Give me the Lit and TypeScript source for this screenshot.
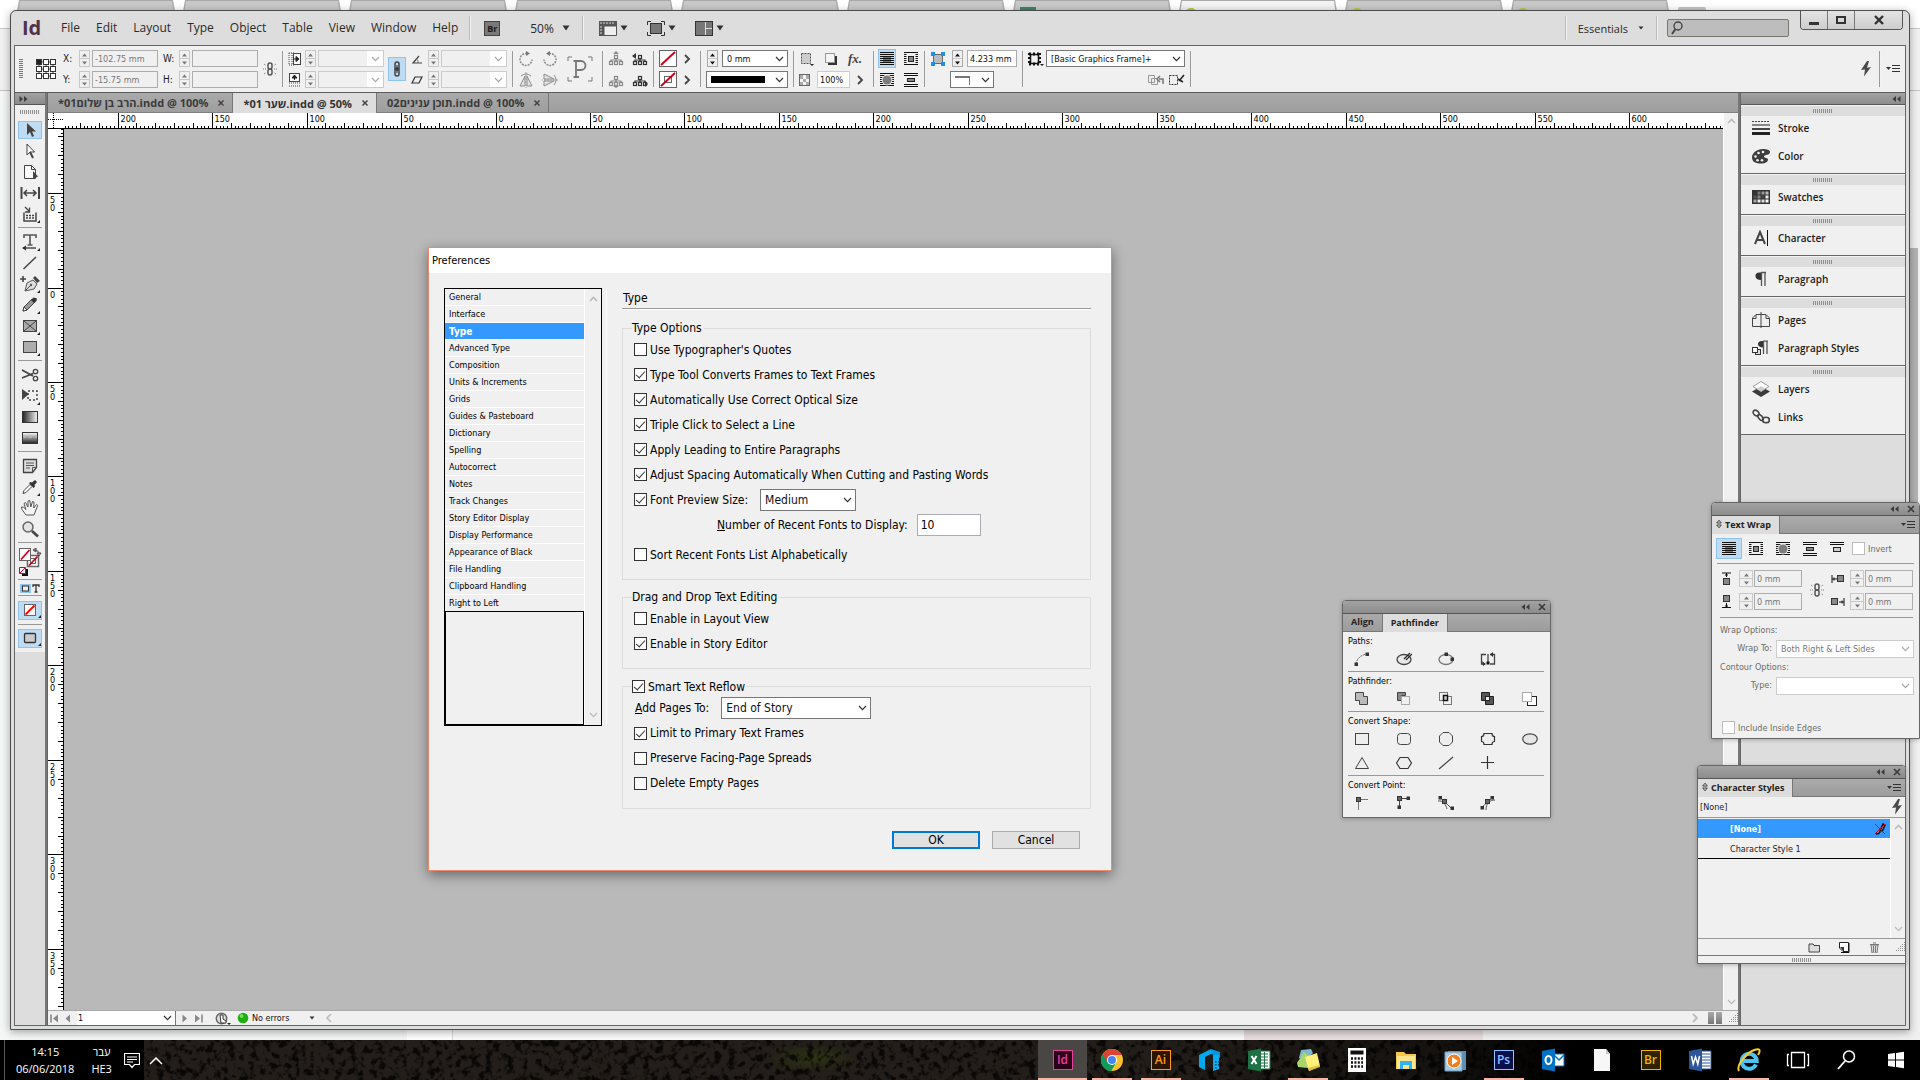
import { LitElement, html, svg, css } from "lit";
import { customElement, state } from "lit/decorators.js";
import { classMap } from "lit/directives/class-map.js";

/* ---------- icon helpers ---------- */
const ic = (w: number, h: number, body: unknown) => html`<svg class="ic" width=${w} height=${h} viewBox="0 0 ${w} ${h}" aria-hidden="true">${body}</svg>`;
const chevDown = ic(9, 6, svg`<path d="M1 1l3.5 3.6L8 1" fill="none" stroke="currentColor" stroke-width="1.2"/>`);
const chevUp = ic(9, 6, svg`<path d="M1 5l3.5-3.6L8 5" fill="none" stroke="currentColor" stroke-width="1.6"/>`);
const chevRight = ic(7, 10, svg`<path d="M1 1l4 4-4 4" fill="none" stroke="currentColor" stroke-width="1.8"/>`);
const chevLeft = ic(7, 10, svg`<path d="M6 1L2 5l4 4" fill="none" stroke="currentColor" stroke-width="1.6"/>`);
const caret = ic(8, 6, svg`<path d="M0.5 0.5h7L4 5.5z" fill="#333"/>`);
const caretSm = ic(6, 4, svg`<path d="M0.5 0.5h5L3 3.5z" fill="#333"/>`);
const dblLeft = ic(9, 6, svg`<path d="M4 0v6L0.500 3zM8.500 0v6L5 3z" fill="#3c3c3c"/>`);
const dblRight = ic(9, 6, svg`<path d="M0.500 0v6L4 3zM5 0v6l3.500-3z" fill="#3c3c3c"/>`);
const closeX = ic(8, 8, svg`<path d="M1 1l6 6M7 1L1 7" stroke="#3c3c3c" stroke-width="1.7"/>`);
const flyout = ic(15, 10, svg`<path d="M0 3h5L2.500 6z" fill="#333"/><path d="M6 1.500h8M6 4.500h8M6 7.500h8" stroke="#333" stroke-width="1"/>`);
const updown = ic(6, 10, svg`<path d="M0.700 4L3 1.200 5.300 4zM0.700 6L3 8.800 5.300 6z" fill="none" stroke="#333" stroke-width="0.900"/>`);
const grip = ic(20, 4, svg`<path d="${Array.from({ length: 10 }, (_, i) => `M${i * 2 + 0.5} 0v4`).join("")}" stroke="#8d8d8d"/>`);
const sizeGrip = ic(10, 10, svg`<path d="M9.500 0v10M7.500 2v8M5.500 4v6M3.500 6v4M1.500 8v2" stroke="#8d8d8d" stroke-dasharray="1 1"/>`);
const chainOff = ic(14, 16, svg`<g fill="none" stroke="#555" stroke-width="1.500"><rect x="5" y="2" width="4" height="6" rx="2"/><rect x="5" y="8" width="4" height="6" rx="2"/></g><path d="M0 8h3M11 8h3M1 3l2 1.500M13 3l-2 1.500M1 13l2-1.500M13 13l-2-1.500" stroke="#777" stroke-dasharray="1 1"/>`);
const chainOn = ic(10, 16, svg`<g fill="none" stroke="#444" stroke-width="1.500"><rect x="3" y="1" width="4" height="8" rx="2"/><rect x="3" y="7" width="4" height="8" rx="2"/></g><path d="M5 4v8" stroke="#222"/>`);
const bolt = ic(12, 16, svg`<path d="M7 0L1 9l4-0.500L4 15.500 11 6l-4 0.700L9 0z" fill="#4a4a4a"/>`);
const redSlash = (w: number, h: number) => ic(w, h, svg`<rect x="0.500" y="0.500" width="${w - 1}" height="${h - 1}" fill="#fff" stroke="#666"/><path d="M2 ${h - 2}L${w - 2} 2" stroke="#d0021b" stroke-width="2"/>`);

const wrapLines = (mid: unknown, rows = [1, 3, 5, 7, 9, 11, 13]) => ic(14, 14, svg`<path d="${rows.map((y) => `M0 ${y - 0.5}h14`).join("")}" stroke="#111"/>${mid}`);
const wrapIcons = [
  wrapLines(svg`<rect x="3" y="4" width="8" height="6" fill="#777"/><path d="M3 4.500h8M3 6.500h8M3 8.500h8" stroke="#111"/>`),
  wrapLines(svg`<rect x="2.500" y="2" width="9" height="10" fill="#f0f0f0"/><rect x="4.500" y="4.500" width="5" height="5" fill="#888" stroke="#222"/>`),
  wrapLines(svg`<circle cx="7" cy="7" r="5.400" fill="#f0f0f0"/><circle cx="7" cy="7" r="4.500" fill="#7d7d7d"/>`),
  wrapLines(svg`<rect x="3.500" y="5.500" width="7" height="3" fill="#888" stroke="#222"/>`, [1, 3, 12, 14]),
  wrapLines(svg`<rect x="3.500" y="5.500" width="7" height="4" fill="#ccc" stroke="#222"/>`, [1, 3]),
];

/* tool palette glyphs, drawn on a 20x18 grid */
const corner = svg`<path d="M20 15v3h-3z" fill="#222"/>`;
const tool = (b: unknown, c = false) => ic(20, 18, svg`${b}${c ? corner : ""}`);
const tools: { name: string; glyph: unknown; on?: boolean }[][] = [
  [
    { name: "Selection", on: true, glyph: tool(svg`<path d="M7 2v12l3-3 2 5 2-1-2-4.500h4z" fill="#444"/>`) },
    { name: "Direct Selection", glyph: tool(svg`<path d="M7 2v11l3-3h4.500z" fill="#fff" stroke="#444"/><path d="M10 10l3 6" stroke="#444" stroke-width="2"/>`) },
    { name: "Page", glyph: tool(svg`<path d="M4.500 2.500h7l4 4v9h-11z" fill="#fafafa" stroke="#444"/><path d="M11.500 2.500v4h4" fill="none" stroke="#444"/><path d="M13 8v8l5-2.500z" fill="#444"/>`) },
    { name: "Gap", glyph: tool(svg`<path d="M1.500 3v12M19 3v12" stroke="#444" stroke-width="2"/><path d="M4 9h12M7 6L4 9l3 3M13 6l3 3-3 3" fill="none" stroke="#444" stroke-width="1.500"/>`) },
    { name: "Content Collector", glyph: tool(svg`<path d="M4 7.500v8.500h12V7.500" fill="none" stroke="#444" stroke-width="1.500"/><path d="M6 10.500h8M6 13h8" stroke="#444" stroke-dasharray="2 1" stroke-width="1.500"/><path d="M5 2l4 4M9.500 2.500V7H5" fill="none" stroke="#444" stroke-width="1.300"/>`, true) },
  ],
  [
    { name: "Type", glyph: tool(svg`<path d="M4 5V2h12v3M10 2v10M7.500 12h5" fill="none" stroke="#555" stroke-width="1.600"/><path d="M3 15h13" stroke="#333" stroke-width="1.300"/><path d="M6 12.500L2 15l4 2.500z" fill="#333"/>`, true) },
    { name: "Line", glyph: tool(svg`<path d="M3.500 15L16 3" stroke="#444" stroke-width="1.500"/>`) },
    { name: "Add Anchor Point", glyph: tool(svg`<path d="M0 4h6M3 1v6" stroke="#444" stroke-width="1.600"/><path d="M5 16l2-8 6-3 4 4-3 5z" fill="#ddd" stroke="#555"/><path d="M5 16l5-5" stroke="#555"/><circle cx="11" cy="10" r="1.200" fill="#555"/><path d="M13 3l2-2 5 5-3 2z" fill="#444"/>`, true) },
    { name: "Pencil", glyph: tool(svg`<path d="M3 15l1-4 8-8 3 3-8 8z" fill="#999" stroke="#444"/><path d="M11 4l2.500-2.500 3.500 1-0.500 2.500L14 7z" fill="#333"/><path d="M3 15l1-4 3 3z" fill="#fff" stroke="#444"/>`, true) },
    { name: "Rectangle Frame", glyph: tool(svg`<rect x="3.500" y="3.500" width="13" height="11" fill="#aaa" stroke="#444"/><path d="M4 4l12 10M16 4L4 14" stroke="#444"/>`, true) },
    { name: "Rectangle", glyph: tool(svg`<rect x="3.500" y="3.500" width="13" height="11" fill="#adadad" stroke="#444"/>`, true) },
  ],
  [
    { name: "Scissors", glyph: tool(svg`<path d="M2 4l11 6M2 12l11-4.500" stroke="#444" stroke-width="1.800"/><circle cx="15.500" cy="5.500" r="2.200" fill="none" stroke="#444" stroke-width="1.300"/><circle cx="15.500" cy="12.500" r="2.200" fill="none" stroke="#444" stroke-width="1.300"/>`) },
    { name: "Free Transform", glyph: tool(svg`<path d="M2 2v11l7-6z" fill="#444"/><rect x="8" y="4" width="9" height="9" fill="none" stroke="#444" stroke-width="1.500" stroke-dasharray="2 2"/>`, true) },
    { name: "Gradient Swatch", glyph: tool(svg`<defs><linearGradient id="g1"><stop offset="0" stop-color="#222"/><stop offset="1" stop-color="#f5f5f5"/></linearGradient></defs><rect x="2.500" y="3.500" width="15" height="11" fill="url(#g1)" stroke="#333"/>`) },
    { name: "Gradient Feather", glyph: tool(svg`<defs><linearGradient id="g2" x1="0" y1="0" x2="0" y2="1"><stop offset="0" stop-color="#fff"/><stop offset="1" stop-color="#222"/></linearGradient></defs><rect x="2.500" y="3.500" width="15" height="11" fill="url(#g2)" stroke="#333"/><path d="M3 6h3v3H3zM9 6h3v3H9zM15 6h2v3h-2z" fill="#bbb" opacity="0.700"/>`) },
  ],
  [
    { name: "Note", glyph: tool(svg`<path d="M3.500 2.500h13v8l-4 5h-9z" fill="#ddd" stroke="#444" stroke-width="1.300"/><path d="M6 6h8M6 8.500h8M6 11h4M12.500 15v-4.500h4" fill="none" stroke="#555"/>`) },
    { name: "Eyedropper", glyph: tool(svg`<path d="M3 15.500l1-3 6-6 2 2-6 6z" fill="#fff" stroke="#444"/><path d="M9 5l1.500-1 1.500 0.500L15 2l2 2-2.500 3 0.500 1.500-1.500 1.500z" fill="#333"/>`, true) },
    { name: "Hand", glyph: tool(svg`<path d="M6 16L2 10.500 1.500 8 3.500 8.200 6 10.500 4 4.500 5.500 3.500 8 8 8 2 9.800 1.500 10.800 8 12.500 2.500 14 3 13.700 9 16.500 5.500 17.800 6.500 15.500 12 14 16z" fill="#f4f4f4" stroke="#555"/>`) },
    { name: "Zoom", glyph: tool(svg`<circle cx="8" cy="7" r="5" fill="#e4e4e4" stroke="#666" stroke-width="1.500"/><path d="M12 11l6 5.500" stroke="#444" stroke-width="2.600"/>`) },
  ],
];

/* dock panel glyphs, 18x16 */
const dock: { name: string; glyph: unknown }[][] = [
  [
    { name: "Stroke", glyph: ic(18, 16, svg`<path d="M0 1.500h18" stroke="#444" stroke-dasharray="2 1"/><path d="M0 5h18" stroke="#666" stroke-width="1.500"/><path d="M0 9h18" stroke="#444" stroke-width="2"/><path d="M0 13.500h18" stroke="#222" stroke-width="3"/>`) },
    { name: "Color", glyph: ic(18, 16, svg`<path d="M11 1C5 1 0 5 0 9.500S4 15.500 9 15.500c5 0 7-2 7-4 0-2-4-1-4-3 0-2 6-1 6-4.500C18 2 15 1 11 1z" fill="#3d3d3d"/><g fill="#f0f0f0"><circle cx="11" cy="4" r="1.300"/><circle cx="6.500" cy="5" r="1.300"/><circle cx="3.500" cy="8.500" r="1.300"/><circle cx="5.500" cy="12.300" r="1.300"/><circle cx="10" cy="12.300" r="1.300"/></g>`) },
  ],
  [{ name: "Swatches", glyph: ic(18, 16, svg`<rect x="0" y="1" width="18" height="14" fill="#333"/>${[0, 1, 2].map((r) => [0, 1, 2, 3].map((c) => svg`<rect x="${1.500 + c * 4}" y="${2.500 + r * 4}" width="3" height="3" fill="${["#333", "#777", "#999", "#bbb", "#555", "#888", "#444", "#eee", "#aaa", "#eee", "#ddd", "#fff"][r * 4 + c]}"/>`))}`) }],
  [{ name: "Character", glyph: ic(18, 16, svg`<path d="M3 14L8 2l5 12M5 10h6" fill="none" stroke="#444" stroke-width="2"/><path d="M15.500 0v16" stroke="#111"/>`) }],
  [{ name: "Paragraph", glyph: ic(18, 16, svg`<path d="M9 1.500C5 1 3.500 2.500 3.500 5s2 4 5.500 4z" fill="#333"/><path d="M9.500 1v14M13 1v14M9 1.500h5" stroke="#555" stroke-width="1.300" fill="none"/>`) }],
  [
    { name: "Pages", glyph: ic(18, 16, svg`<path d="M0.500 14.500V6L4 2.500h10L17.500 6v8.500z" fill="#eee" stroke="#444"/><path d="M9 0v16M4 3v3.500H1M14 3v3.500h3" stroke="#444" fill="none"/>`) },
    { name: "Paragraph Styles", glyph: ic(18, 16, svg`<path d="M11 1C7.500 0.500 6 2 6 4s2 3.500 5 3.500z" fill="#333"/><path d="M11.500 1v13M15 1v13M11 1.200h5" stroke="#555" stroke-width="1.300" fill="none"/><rect x="3.500" y="9.500" width="5" height="5" fill="#ddd" stroke="#333"/><rect x="0.500" y="7.500" width="5" height="5" fill="#fff" stroke="#333"/>`) },
  ],
  [
    { name: "Layers", glyph: ic(18, 16, svg`<path d="M9 5.500l9 5-9 5.500-9-5.500z" fill="#3a3a3a"/><path d="M9 0.500L17 5.500 9 10.500 1 5.500z" fill="#fff" stroke="#999"/><path d="M9 5l4 3-4 2.500L5 8z" fill="#ccc"/>`) },
    { name: "Links", glyph: ic(18, 16, svg`<g fill="none" stroke="#444" stroke-width="1.600"><ellipse cx="4" cy="4" rx="3.200" ry="2.400" transform="rotate(40 4 4)"/><ellipse cx="8.500" cy="8.500" rx="3.500" ry="1.800" transform="rotate(50 8.500 8.500)"/><ellipse cx="14" cy="11" rx="3.400" ry="2.800"/></g>`) },
  ],
];

/* pathfinder glyphs, 16x14 */
const p = (b: unknown) => ic(16, 14, b);
const sq = (x: number, y: number) => svg`<rect x="${x - 1.500}" y="${y - 1.500}" width="3.500" height="3.500" fill="#333"/>`;
const pathSections: { name: string; rows: [string, unknown][][] }[] = [
  { name: "Paths:", rows: [[
    ["Join Path", p(svg`<path d="M2 12C3 6 7 3 13 2" fill="none" stroke="#666" stroke-dasharray="2 1"/>${sq(2, 12)}${sq(13, 2)}`)],
    ["Open Path", p(svg`<ellipse cx="8" cy="7.500" rx="7" ry="5" fill="#e8e8e8" stroke="#444" stroke-width="1.300"/><path d="M8 7l6-6M10 8l6-6" stroke="#222" stroke-width="1.200"/>`)],
    ["Close Path", p(svg`<ellipse cx="8" cy="7.500" rx="7" ry="5" fill="#eee" stroke="#777" stroke-width="1.300"/>${sq(8, 2)}${sq(14, 7)}`)],
    ["Reverse Path", p(svg`<path d="M5 12H1.500V2.500H6M10 2.500h4.500V12H10M8 2v10" fill="none" stroke="#444" stroke-width="1.300"/><path d="M2 9l4 3-3 2zM13 0v5l-3-2.500z" fill="#333"/><rect x="6.500" y="9.500" width="3" height="3" fill="#111"/>`)],
  ]] },
  { name: "Pathfinder:", rows: [[
    ["Add", p(svg`<path d="M1.500 0.500h8v4h4v8h-8v-4h-4z" fill="#bbb" stroke="#444"/>`)],
    ["Subtract", p(svg`<path d="M1.500 0.500h8v3H5.500v5h-4z" fill="#888" stroke="#444"/><rect x="5.500" y="4.500" width="8" height="8" fill="#f0f0f0" stroke="#aaa"/>`)],
    ["Intersect", p(svg`<rect x="1.500" y="0.500" width="8" height="8" fill="none" stroke="#777"/><rect x="5.500" y="4.500" width="8" height="8" fill="none" stroke="#777"/><rect x="5.500" y="3.500" width="4" height="5" fill="#ccc" stroke="#111" stroke-width="1.500"/>`)],
    ["Exclude Overlap", p(svg`<path d="M1.500 0.500h8v4h4v8h-8v-4h-4z" fill="#555" stroke="#222"/><rect x="5.500" y="4.500" width="4" height="4" fill="#eee" stroke="#222"/>`)],
    ["Minus Back", p(svg`<rect x="5.500" y="4.500" width="9" height="9" fill="#fff" stroke="#222"/><rect x="0.500" y="0.500" width="9" height="9" fill="#fff" stroke="#aaa"/>`)],
  ]] },
  { name: "Convert Shape:", rows: [[
    ["Rectangle", p(svg`<rect x="1.500" y="1.500" width="13" height="11" fill="#eee" stroke="#444"/>`)],
    ["Rounded Rectangle", p(svg`<rect x="1.500" y="1.500" width="13" height="11" rx="3" fill="#eee" stroke="#444"/>`)],
    ["Beveled Rectangle", p(svg`<path d="M5 0.500h6l3.500 3.500v6L11 13.500H5L1.500 10V4z" fill="#eee" stroke="#444"/>`)],
    ["Inverse Rounded Rectangle", p(svg`<path d="M4 1.500h8q0 3 2.500 3v5q-2.500 0-2.500 3H4q0-3-2.500-3v-5Q4 4.500 4 1.500z" fill="#eee" stroke="#333" stroke-width="1.200"/>`)],
    ["Ellipse", p(svg`<ellipse cx="8" cy="7" rx="7.300" ry="5.200" fill="#e6e6e6" stroke="#444" stroke-width="1.200"/>`)],
  ], [
    ["Triangle", p(svg`<path d="M8 1.500L14.500 12.500h-13z" fill="#eee" stroke="#444"/>`)],
    ["Polygon", p(svg`<path d="M4 1.500h8l3.500 5.500-3.500 5.500H4L0.500 7z" fill="#eee" stroke="#333" stroke-width="1.200"/>`)],
    ["Line", p(svg`<path d="M1 13L15 1" stroke="#444" stroke-width="1.200"/>`)],
    ["Orthogonal Line", p(svg`<path d="M1 6.500h13M7.500 0v13" stroke="#333" stroke-width="1.200"/>`)],
  ]] },
  { name: "Convert Point:", rows: [[
    ["Plain", p(svg`<path d="M4.500 3v11M4 3.500h10" stroke="#777"/><rect x="2.500" y="1.500" width="4" height="4" fill="#666" stroke="#333"/>`)],
    ["Corner", p(svg`<path d="M3.500 3v9M4 2.500h9" stroke="#444"/><rect x="1.500" y="0.500" width="4" height="4" fill="#666" stroke="#333"/>${sq(12, 2)}${sq(3, 11)}`)],
    ["Smooth", p(svg`<path d="M1 0l13 13M0 5c5-1 8 4 9 8" fill="none" stroke="#555"/><rect x="4.500" y="3.500" width="4" height="4" fill="#666" stroke="#333"/>${sq(2, 1.500)}${sq(14, 12)}`)],
    ["Symmetrical", p(svg`<path d="M1 12L13 1M15 4C10 4 6 7 6 14" fill="none" stroke="#555"/><rect x="5.500" y="3.500" width="4" height="4" fill="#666" stroke="#333"/>${sq(12, 1.500)}${sq(2, 11.500)}`)],
  ]] },
];

/* ---------- data ---------- */
const menus = ["File", "Edit", "Layout", "Type", "Object", "Table", "View", "Window", "Help"];
const docs = [
  { name: "*01הרב בן שלום.indd @ 100%", on: false },
  { name: "*01 שער.indd @ 50%", on: true },
  { name: "02תוכן ענינים.indd @ 100%", on: false },
];
const prefs = ["General", "Interface", "Type", "Advanced Type", "Composition", "Units & Increments", "Grids", "Guides & Pasteboard", "Dictionary", "Spelling", "Autocorrect", "Notes", "Track Changes", "Story Editor Display", "Display Performance", "Appearance of Black", "File Handling", "Clipboard Handling", "Right to Left"];

const PX_PER_MM = 1.8898;
const ticks = (origin: number, length: number) => {
  const out: { pos: number; mm: number }[] = [];
  const first = Math.ceil(-origin / PX_PER_MM / 2) * 2;
  for (let mm = first; origin + mm * PX_PER_MM < length; mm += 2) out.push({ pos: Math.floor(origin + mm * PX_PER_MM) + 0.5, mm });
  return out;
};

/* taskbar glyphs, 24x24 */
const adobe = (t: string, bg: string, fg: string) => html`<span class="adobe" style="background:${bg};color:${fg};border-color:${fg}">${t}</span>`;
const apps: { name: string; glyph: unknown; open?: boolean; on?: boolean }[] = [
  { name: "InDesign", open: true, on: true, glyph: adobe("Id", "#2d0019", "#e83e9c") },
  { name: "Chrome", open: true, glyph: ic(24, 24, svg`<circle cx="12" cy="12" r="11" fill="#fbc02d"/><path d="M12 12L2.500 6.500A11 11 0 0 1 21.500 6.500L21.700 7H12z" fill="#db4437"/><path d="M2.500 6.500A11 11 0 0 0 11 23l5-8.500-4-2.500z" fill="#0f9d58"/><path d="M2.500 6.500L7.700 14.500 12 12 12 7z" fill="#db4437"/><path d="M2.500 6.500L7.700 14.500 12 16 16 14.500 11 23A11 11 0 0 1 2.500 6.500z" fill="#0f9d58"/><circle cx="12" cy="12" r="5" fill="#fff"/><circle cx="12" cy="12" r="4" fill="#4285f4"/>`) },
  { name: "Illustrator", open: true, glyph: adobe("Ai", "#2b1400", "#ff9a1e") },
  { name: "Azure", glyph: ic(24, 24, svg`<path d="M1 7L13 1v5L7 9v13l-6-3z" fill="#00a8ee"/><path d="M13 1l9 3v6l-4-2-5-2z" fill="#0098e0"/><path d="M15 7h6v14l-6 2z" fill="#00b0f4"/><path d="M17 13h1.500v1.500H17zM20 13h1.500v1.500H20zM17 16h1.500v1.500H17zM20 16h1.500v1.500H20zM17 19h1.500v1.500H17z" fill="#053a5c"/>`) },
  { name: "Excel", glyph: ic(24, 24, svg`<path d="M12 3h11v18H12z" fill="#fff" stroke="#1e7145"/><path d="M14 6h7M14 9h7M14 12h7M14 15h7M14 18h7M17.500 4v16" stroke="#1e7145"/><path d="M1 3l13-2.500v23L1 21z" fill="#1e7145"/><path d="M4.500 8l5 8M9.500 8l-5 8" stroke="#fff" stroke-width="2"/>`) },
  { name: "Sticky Notes", open: true, glyph: ic(24, 24, svg`<path d="M5 2l10-1 2 4-8 8-6-3z" fill="#7fb8cc"/><path d="M1 15L8 4l8 6-4 10-10-1z" fill="#a8d66c"/><path d="M9 9l12-4 3 13-11 5z" fill="#fff07a"/><path d="M12 20l12-3v2l-11 4z" fill="#e0c040"/>`) },
  { name: "Calculator", glyph: ic(24, 24, svg`<rect x="3" y="0" width="18" height="24" fill="#fff"/><rect x="5.500" y="2.500" width="13" height="4" fill="#111"/><path d="M6 10.500h12M6 14.500h12M6 18.500h12" stroke="#111" stroke-width="2.500" stroke-dasharray="2 1.400"/>`) },
  { name: "File Explorer", glyph: ic(24, 24, svg`<path d="M2 4h8l2 2h10v15H2z" fill="#f5c84c"/><path d="M3 8h18v13H3z" fill="#ffe48c"/><path d="M6 21v-8h12v8h-3v-4H9v4z" fill="#2fb4f0"/>`) },
  { name: "Media Player", glyph: ic(24, 24, svg`<path d="M5 3h18v19H5z" fill="#5c8fb4"/><path d="M2 4h17v19H2z" fill="#a8cbe3" stroke="#6a9cc0"/><circle cx="11" cy="13" r="7" fill="#f07f1c" stroke="#fff"/><path d="M9 9l6 4-6 4z" fill="#fff"/>`) },
  { name: "Photoshop", open: true, glyph: adobe("Ps", "#0b0f4a", "#8fc1ff") },
  { name: "Outlook", glyph: ic(24, 24, svg`<path d="M12 6h11v12H12z" fill="#fff" stroke="#0072c6"/><path d="M13 7l5 5 5-5" fill="none" stroke="#0072c6" stroke-width="1.500"/><path d="M1 3l13-2.500v23L1 21z" fill="#0072c6"/><ellipse cx="7.500" cy="12" rx="3" ry="4" fill="none" stroke="#fff" stroke-width="2"/>`) },
  { name: "Document", glyph: ic(24, 24, svg`<path d="M4 1h12l4 5v17H4z" fill="#f7f7f7"/><path d="M16 1v5h4z" fill="#c8c8c8"/>`) },
  { name: "Bridge", glyph: adobe("Br", "#2e2200", "#f0b400") },
  { name: "Word", glyph: ic(24, 24, svg`<path d="M12 3h11v18H12z" fill="#fff" stroke="#2b579a"/><path d="M14 6h8M14 9h8M14 12h8M14 15h8M14 18h8" stroke="#2b579a"/><path d="M1 3l13-2.500v23L1 21z" fill="#2b579a"/><path d="M3.500 8l1.700 8L7.500 9l2.300 7 1.700-8" fill="none" stroke="#fff" stroke-width="1.500"/>`) },
  { name: "Internet Explorer", open: true, glyph: ic(24, 24, svg`<path d="M19 16.500A7.500 7.500 0 1 1 19.700 13H6" fill="none" stroke="#4cc3f5" stroke-width="4"/><path d="M2 23C-1 18 9 4 19 1.500 24 0.500 23 4 21 7" fill="none" stroke="#f6cf2e" stroke-width="2"/>`) },
  { name: "Task View", glyph: ic(24, 24, svg`<path d="M5.500 4.500h13v15h-13zM3 6.500H1.500v11H3M21 6.500h1.500v11H21" fill="none" stroke="#fff" stroke-width="1.300"/>`) },
  { name: "Search", glyph: ic(24, 24, svg`<circle cx="14" cy="8.500" r="5.500" fill="none" stroke="#fff" stroke-width="1.500"/><path d="M10 13l-7 8" stroke="#fff" stroke-width="1.800"/>`) },
  { name: "Start", glyph: ic(24, 24, svg`<path d="M4 6l7-1v6.500H4zM12 5l8-1.200v7.700h-8zM4 12.500h7V19l-7-1zM12 12.500h8v7.700L12 19z" fill="#fff"/>`) },
];

/* ---------- control fragments ---------- */
const spin = (what: string, dark = false) => html`<span class=${classMap({ spin: true, dark })}>
  <button aria-label="Increase ${what}">${ic(5, 4, svg`<path d="M0 3.500h5L2.500 0.500z" fill="currentColor"/>`)}</button>
  <button aria-label="Decrease ${what}">${ic(5, 4, svg`<path d="M0 0.500h5L2.500 3.500z" fill="currentColor"/>`)}</button></span>`;
const drop = (label: string, value: string, cls = "", id = "") => html`<span class="drop ${cls}"><select id=${id || label.replace(/\W/g, "")} aria-label=${label}><option>${value}</option></select>${chevDown}</span>`;
const check = (label: string, on: boolean) => html`<label class="check"><input type="checkbox" ?checked=${on} />${label}</label>`;
const small = (name: string, g: unknown, on = false) => html`<button class=${classMap({ small: true, on })} aria-label=${name}>${g}</button>`;

const rot = (flip: boolean) => ic(16, 16, svg`<g transform=${flip ? "matrix(-1 0 0 1 16 0)" : ""}><path d="M9 2.500a6 6 0 1 0 5 6" fill="none" stroke="#8a8a8a" stroke-width="1.500" stroke-dasharray="2 1"/><path d="M8 0l4 2.500L8 5z" fill="#777"/></g>`);
const flipIcon = (v: boolean) => ic(16, 16, svg`<g transform=${v ? "rotate(90 8 8)" : ""}><path d="M7 4L2 14h5zM9 4l5 10H9z" fill="#e4e4e4" stroke="#8a8a8a"/><path d="M8 0v16" stroke="#999" stroke-dasharray="2 1"/><path d="M3 4q5-4 10 0" fill="none" stroke="#888"/></g>`);
const tree = (dir: number, c: string) => ic(16, 16, svg`<g fill="none" stroke=${c} stroke-width="1.200"><rect x="6.500" y="4.500" width="3" height="3"/><rect x="1.500" y="10.500" width="3" height="3"/><rect x="6.500" y="10.500" width="3" height="3"/><rect x="11.500" y="10.500" width="3" height="3"/><path d="M8 8v2M3 10V9h10v1"/></g><path d=${["M8 0l3 3H5z", "M8 16l3-2H5z", "M0 5l4-3v6z", "M16 12l-3-3v6z"][dir]} fill=${c}/>`);

@customElement("app-root")
export class AppRoot extends LitElement {
  static styles = css`
    :host { display: block; --ui: "DejaVu Sans Condensed", "DejaVu Sans", sans-serif; --head: "Open Sans", "Noto Sans", sans-serif; font-family: var(--ui); font-size: 9px; color: #1c1c1c; }
    * { box-sizing: border-box; }
    button, input, select { font: inherit; color: inherit; margin: 0; padding: 0; border: 0; border-radius: 0; background: none; outline: none; min-width: 0; }
    button { display: inline-flex; align-items: center; justify-content: center; }
    a { color: inherit; text-decoration: none; }
    ul { list-style: none; margin: 0; padding: 0; }
    .ic { display: block; flex: none; }
    .screen { position: relative; display: flex; flex-direction: column; min-height: 100vh; overflow: hidden; background: #f5f6f6; }

    /* browser behind */
    .behind { position: absolute; left: 0; right: 0; top: 0; height: 91px; border-bottom: 1px solid #c4c4c4; background: linear-gradient(#fff 0 28px, #c9c9c9 28px 29px, #f1f1f1 29px); }
    .behindtabs { display: flex; padding-left: 14px; gap: 2px; align-items: flex-start; }
    .behindtabs i { flex: 0 0 164px; height: 28px; background: #a9a9a9; clip-path: polygon(5px 0, 159px 0, 100% 100%, 0 100%); }
    .behindtabs i::after { content: ""; display: block; height: 100%; background: #c9c9c9; margin: 1px 2px 0; clip-path: polygon(4px 0, 156px 0, 100% 100%, 0 100%); }
    .behindtabs i.sheet::after { background: linear-gradient(#3c8a5c, #3c8a5c) 8px 6px / 16px 16px no-repeat #c9c9c9; }
    .behindtabs i.lime::after { background: radial-gradient(#b4cc48 60%, transparent 62%) 6px 6px / 14px 14px no-repeat #c9c9c9; }
    .behindtabs i.live::after { background-color: #f3f3f3; }
    .behindtabs b { width: 28px; height: 12px; margin: 7px 4px; background: #c4c4c4; border-radius: 2px; }
    .behindbar { position: absolute; right: 0; top: 91px; bottom: 50px; width: 12px; background: #f1f1f1; padding-top: 157px; }
    .behindbar i { display: block; height: 300px; width: 10px; background: #b4b4b4; }
    .behindfoot { position: absolute; left: 407px; right: 0; bottom: 40px; height: 11px; background: linear-gradient(90deg, #fff 0 45px, #dcdcdc 45px 46px, #fbfbfb 46px 837px, #e8dfdf 837px 1076px, #f0f0f0 1076px); }

    /* application window */
    .app { position: relative; flex: 1; display: flex; flex-direction: column; margin: 10px 10px; padding: 0 3px 3px 3px; background: #ddd; border: 1px solid #4c4c4c; border-radius: 6px 6px 0 0; box-shadow: 0 2px 8px rgba(0,0,0,.35); }
    .bar { display: flex; align-items: center; height: 34px; font-family: var(--head); font-size: 12px; color: #2a2a2a; }
    .idlogo { width: 32px; padding-left: 8px; font-size: 20px; font-weight: 700; line-height: 24px; color: #54304a; }
    .menus { display: flex; gap: 16px; padding-left: 15px; }
    .menus a { line-height: 20px; }
    .vsep { width: 1px; height: 24px; background: #bcbcbc; box-shadow: 1px 0 #f2f2f2; flex: none; }
    .menus + .vsep { margin-left: 11px; }
    .br { width: 16px; height: 15px; margin: 0 30px 0 14px; border: 1px solid #444; background: #7a7a7a; color: #1c1c1c; font-size: 9px; font-weight: 700; }
    .zoom { gap: 8px; margin-right: 12px; }
    .views { display: flex; gap: 19px; padding-left: 16px; }
    .views button { gap: 3px; }
    .space { flex: 1; }
    .essent { gap: 10px; margin: 0 12px; font-size: 11px; }
    .find { display: flex; align-items: center; width: 122px; height: 18px; margin: 0 11px 0 10px; background: #bdbdbd; border: 1px solid #77776a; border-radius: 2px; padding-left: 3px; }
    .find input { flex: 1; height: 100%; }
    .wbtns { display: flex; align-self: flex-start; margin-right: 3px; border: 1px solid #555; border-top: 0; border-radius: 0 0 4px 4px; overflow: hidden; }
    .wbtns button { width: 27px; height: 18px; background: linear-gradient(#e4e4e4, #cdcdcd); border-right: 1px solid #777; }
    .wbtns button:last-child { width: 47px; border: 0; }

    .control { display: flex; align-items: center; height: 48px; padding: 0 4px; gap: 5px; background: #f0f0f0; border: 1px solid #666; border-bottom-color: #5c5c5c; }
    .control .vsep { height: 36px; background: #9a9a9a; }
    .col { display: flex; flex-direction: column; gap: 4px; }
    .line { display: flex; align-items: center; height: 17px; gap: 2px; }
    .line.end { justify-content: flex-end; gap: 4px; }
    .lbl { width: 14px; color: #1c1c1c; font-size: 10px; }
    .dots { width: 4px; height: 20px; background: repeating-linear-gradient(#777 0 1px, #f0f0f0 1px 2px); margin-right: 8px; }
    .spin { display: inline-flex; flex-direction: column; width: 11px; height: 17px; border: 1px solid #c8c8c8; color: #777; flex: none; }
    .spin.dark { color: #111; border-color: #aaa; }
    .spin button { flex: 1; width: 100%; }
    .spin button + button { border-top: 1px solid #c8c8c8; }
    .field { width: 66px; height: 17px; border: 1px solid #adadad; padding-left: 2px; color: #777; background: #f0f0f0; }
    .field.live { color: #111; background: #fff; width: 50px; }
    .field.pct { width: 33px; border-color: #ccc; }
    .drop { display: inline-grid; align-items: center; width: 66px; height: 17px; color: #aaa; }
    .drop > * { grid-area: 1 / 1; }
    .drop select { appearance: none; width: 100%; height: 100%; padding: 0 18px 0 4px; background: #fff; border: 1px solid #ccc; color: #777; }
    .drop .ic { justify-self: end; margin-right: 4px; pointer-events: none; }
    .drop.live { color: #333; }
    .drop.live select { border-color: #777; color: #111; }
    .drop.off select { background: linear-gradient(90deg, #f0f0f0 0 48px, #fff 48px); }
    .drop.stroke select { background: linear-gradient(#000, #000) 4px 4px / 54px 7px no-repeat #fff; }
    .drop.stroke { width: 82px; }
    .drop.frame { width: 139px; }
    .drop.corner { width: 44px; }
    .drop.corner select { background: linear-gradient(#777, #777) 4px 4px / 15px 2px no-repeat, linear-gradient(#777, #777) 18px 4px / 1px 9px no-repeat #fff; }
    .small { min-width: 16px; height: 17px; color: #444; }
    .small.on, .chain { background: #bfdcf3; box-shadow: 0 0 0 1px #90c3ee; }
    .chain { width: 16px; height: 22px; }
    .fxrow { gap: 8px; }
    .tight { gap: 2px; }
    .fx { font: italic 700 13px "Liberation Serif", serif; }

    .work { flex: 1; display: flex; border: 1px solid #666; border-top: 0; min-height: 0; }
    .tools { flex: 0 0 30px; min-width: 0; background: #ddd; }
    .dockhead { display: flex; align-items: center; height: 12px; background: linear-gradient(#a2a2a2, #8c8c8c); border-bottom: 1px solid #555; padding: 0 4px; }
    .dockhead.right { justify-content: flex-end; gap: 8px; }
    .toolset { background: #f0f0f0; padding: 5px 3px 4px; display: flex; flex-direction: column; }
    .toolset > .ic { align-self: center; margin-bottom: 7px; }
    .tgroup { display: flex; flex-direction: column; gap: 3px; padding: 0 0 4px; border-bottom: 1px solid #999; margin-bottom: 5px; }
    .tgroup button { height: 18px; width: 24px; padding: 0; }
    .tgroup button.on, .modebtn { background: #bfdcf3; box-shadow: inset 0 0 0 1px #90c3ee; }
    .modebtn { width: 24px; height: 19px; }
    .fills { padding: 0 0 2px; border-bottom: 1px solid #999; margin-bottom: 3px; }
    .minis { display: flex; align-items: center; justify-content: space-between; padding: 0 2px 2px; border-bottom: 1px solid #999; margin-bottom: 5px; }
    .minis .small { min-width: 0; height: 10px; }
    .modewrap { border-bottom: 1px solid #999; padding-bottom: 4px; margin-bottom: 4px; display: flex; }
    .divider { width: 3px; background: #777; border-right: 1px solid #666; flex: none; }
    .doc { flex: 1; min-width: 0; display: flex; flex-direction: column; }
    .tabs { display: flex; height: 20px; background: linear-gradient(#aaa, #9e9e9e); border-bottom: 1px solid #808080; font: 700 11px var(--head); color: #3a3a3a; }
    .tab { display: flex; align-items: center; gap: 9px; padding: 0 7px 0 10px; border-right: 1px solid #777; }
    .tab.on { background: #ddd; margin-bottom: -1px; color: #333; }
    .mid { flex: 1; display: grid; grid-template: 16px 1fr / 16px 1fr 15px; min-height: 0; }
    .hr { background: #fff; border-bottom: 1px solid #000; overflow: hidden; }
    .vr { background: #fff; border-right: 1px solid #000; overflow: hidden; position: relative; }
    .vr svg, .hr svg { display: block; }
    .vr svg { position: absolute; inset: 0 auto auto 0; }
    .canvas { background: #b9b9b9; }
    .vs { grid-row: 1 / 3; grid-column: 3; background: #f0f0f0; display: flex; flex-direction: column; justify-content: space-between; align-items: center; padding: 5px 0; border-left: 1px solid #fff; color: #bbb; }
    .status { display: flex; align-items: center; height: 15px; background: #f0f0f0; border-top: 1px solid #aaa; gap: 6px; padding-left: 2px; color: #777; }
    .status .drop { width: 99px; height: 14px; }
    .status .drop select { border-width: 0 1px 0 0; padding-left: 1px; }
    .status .err { gap: 3px; color: #111; margin-right: 8px; }
    .hs { flex: 1; display: flex; align-items: center; justify-content: space-between; color: #bbb; padding: 0 3px 0 4px; }
    .split { display: flex; gap: 2px; }
    .split i { width: 6px; height: 12px; background: linear-gradient(#aaa, #777); }

    .dock { flex: 0 0 164px; background: #ddd; min-width: 0; }
    .dgroup { border-bottom: 1px solid #666; padding-bottom: 3px; background: #f0f0f0; }
    .dgrip { display: flex; justify-content: center; align-items: center; height: 11px; background: #ddd; border-top: 1px solid #f4f4f4; margin-bottom: -2px; }
    .dgroup button { display: flex; justify-content: flex-start; gap: 8px; width: 100%; height: 28px; padding-left: 11px; font: 600 10px var(--head); color: #1c1c1c; }

    /* floating panels */
    .panel { position: absolute; background: #f0f0f0; border: 1px solid #666; border-radius: 4px 4px 0 0; box-shadow: 0 1px 4px rgba(0,0,0,.25); overflow: hidden; }
    .panel > .dockhead { height: 13px; padding: 0 4px; }
    .ptabs { display: flex; align-items: stretch; height: 18px; background: linear-gradient(#aaa, #9c9c9c); border-bottom: 1px solid #777; font: 700 9px var(--head); color: #222; }
    .ptabs button { padding: 0 8px 2px; gap: 3px; border-right: 1px solid #777; font: inherit; }
    .ptabs .on { background: #ddd; margin-bottom: -1px; }
    .textwrap .ptabs .on, .charstyles .ptabs .on { padding-left: 4px; }
    .ptabs .menu { margin-left: auto; border: 0; padding: 0 3px; }
    .pathfinder { right: 369px; top: 600px; width: 209px; color: #000; }
    .psec { margin: 0 6px 0 5px; padding: 1px 0 0; border-bottom: 1px solid #999; }
    .psec:last-child { border: 0; padding-bottom: 2px; }
    .psec h3 { margin: 0; font: inherit; line-height: 17px; height: 14px; }
    .prow { display: flex; gap: 14px; height: 24px; }
    .prow button { width: 28px; }
    .textwrap { right: 0; top: 502px; width: 209px; color: #6c6c6c; }
    .textwrap .top { display: flex; align-items: center; gap: 3px; height: 30px; margin: 0 5px; border-bottom: 1px solid #999; }
    .textwrap .top .small { width: 24px; height: 19px; }
    .offs { display: grid; grid-template-columns: auto auto auto; justify-content: space-between; align-items: center; margin: 0 6px 0 8px; padding: 6px 0 7px; border-bottom: 1px solid #999; }
    .offs .col { gap: 6px; }
    .offs .line { gap: 1px; }
    .offs .line > .ic { margin-right: 4px; }
    .offs .spin { width: 14px; }
    .offs .field { width: 48px; }
    .wopts { display: grid; grid-template-columns: 56px 1fr; column-gap: 4px; align-items: center; padding: 3px 5px 0 4px; }
    .wopts .full { grid-column: 1 / 3; line-height: 18px; padding-left: 4px; }
    .wopts label { text-align: right; line-height: 19px; }
    .wopts .drop { width: 100%; height: 18px; }
    .textwrap .check { gap: 3px; }
    .textwrap .check input { border-color: #bbb; }
    .include { padding: 26px 10px 2px; }
    .charstyles { right: 14px; top: 765px; width: 209px; }
    .cshead { display: flex; justify-content: space-between; align-items: center; height: 21px; padding: 0 2px 0 2px; border-bottom: 1px solid #999; }
    .cslist { display: flex; height: 121px; border-bottom: 1px solid #999; }
    .cslist ul { flex: 1; padding-top: 1px; }
    .cslist li button { width: 100%; height: 19px; justify-content: space-between; padding: 0 4px 0 32px; }
    .cslist li { border-bottom: 1px solid #fff; }
    .cslist li.on { background: #3399ff; color: #fff; font-weight: 700; }
    .cslist li + li { border-bottom: 1px solid #000; }
    .sbar { display: flex; flex-direction: column; justify-content: space-between; align-items: center; width: 15px; padding: 6px 0; color: #bbb; border-left: 1px solid #fff; }
    .csfoot { display: flex; justify-content: flex-end; align-items: center; gap: 14px; height: 17px; border-bottom: 1px solid #777; }
    .csfoot .ic:last-child { margin-left: -2px; }
    .csgrip { display: flex; justify-content: center; align-items: center; height: 7px; }

    /* preferences dialog */
    .dialog { position: absolute; left: 428px; top: 247px; width: 684px; background: #f0f0f0; border: 1px solid #ea8a6c; box-shadow: 0 4px 12px rgba(0,0,0,.45); font-size: 12px; color: #000; }
    .dialog h1 { margin: 0; height: 25px; padding: 0 3px; background: #fff; font: inherit; font-size: 11px; line-height: 25px; }
    .dbody { display: flex; padding: 15px 20px 0 15px; gap: 20px; }
    .plist { display: flex; flex: 0 0 158px; height: 438px; border: 1px solid #000; font-size: 9px; box-shadow: 4px 0 0 #f0f0f0, 5px 0 0 #fff; }
    .plist ul { flex: 1; display: flex; flex-direction: column; }
    .plist li { height: 17px; border-bottom: 1px solid #fff; }
    .plist li button { width: 100%; height: 16px; justify-content: flex-start; padding-left: 4px; }
    .plist li.on { background: #3399ff; color: #fff; font-weight: 700; font-size: 10px; }
    .plist li.rest { flex: 1; border: 1px solid #000; margin-top: -1px; }
    .plist .sbar { width: 17px; padding: 7px 0; }
    .pane { flex: 1; min-width: 0; }
    .pane h2 { margin: 0; font: inherit; line-height: 20px; padding-left: 1px; border-bottom: 1px solid #999; box-shadow: 0 1px #fff; }
    fieldset { margin: 9px 0 0; padding: 1px 0 12px 11px; border: 1px solid #dcdcdc; min-width: 0; }
    .pane h2 + fieldset { margin-top: 11px; }
    legend { padding: 0 2px 0 0; margin-left: -2px; line-height: 16px; }
    .row { display: flex; align-items: center; height: 25px; gap: 12px; }
    .row.num { padding-left: 83px; gap: 9px; }
    .row.gap { margin-top: 5px; }
    .row.add { padding-left: 1px; }
    .check { display: inline-flex; align-items: center; gap: 3px; }
    .check input { appearance: none; display: grid; place-items: center; width: 13px; height: 13px; background: #fff; border: 1px solid #333; flex: none; }
    .check input:checked::before { content: ""; width: 4px; height: 8px; margin-top: -2px; border: solid #333; border-width: 0 1px 1px 0; transform: rotate(42deg); }
    .dialog .drop { height: 22px; width: 96px; }
    .dialog .drop.wide { width: 150px; }
    .num input { width: 64px; height: 22px; background: #fff; border: 1px solid #ababb3; padding-left: 3px; }
    .btns { display: flex; justify-content: flex-end; gap: 12px; padding: 22px 31px 21px; }
    .btns button { width: 88px; height: 18px; background: #e1e1e1; border: 1px solid #adadad; }
    .btns .ok { border: 2px solid #0078d7; }

    /* taskbar */
    .taskbar { position: relative; display: flex; height: 40px; color: #fff; font: 12px var(--head); background: radial-gradient(ellipse 46px 14px at 812px 18px, #2e3514, transparent), linear-gradient(90deg, #231e19 0, #231e19 60%, #15120f 75%, #000 82%); }
    .grain { position: absolute; inset: 0; width: 100%; height: 100%; }
    .tray, .up, .apps { position: relative; }
    .tray { display: flex; align-items: center; padding-left: 16px; width: 144px; background: linear-gradient(90deg, #000 4px, #555 4px 5px, #000 5px); gap: 17px; text-align: center; line-height: 17px; font-size: 11px; }
    .tray .ic { margin-left: -5px; }
    .up { margin-left: 5px; color: #fff; }
    .apps { display: flex; margin-left: auto; }
    .apps button { width: 49px; height: 40px; }
    .apps button.open { background: linear-gradient(#f7b5a5, #f7b5a5) center bottom / 40px 2px no-repeat; }
    .apps button.on { background: linear-gradient(#f7b5a5, #f7b5a5) center bottom / 100% 2px no-repeat #4a4644; }
    .adobe { width: 20px; height: 20px; border: 1px solid; font-size: 12px; font-weight: 600; line-height: 17px; }
  `;

  @state() private view = { w: window.innerWidth, h: window.innerHeight };

  private onResize = () => { this.view = { w: window.innerWidth, h: window.innerHeight }; };

  connectedCallback() {
    super.connectedCallback();
    window.addEventListener("resize", this.onResize);
  }

  disconnectedCallback() {
    window.removeEventListener("resize", this.onResize);
    super.disconnectedCallback();
  }

  private renderBar() {
    return html`<header class="bar">
      <span class="idlogo">Id</span>
      <nav class="menus">${menus.map((m) => html`<a href="#${m}">${m}</a>`)}</nav>
      <span class="vsep"></span>
      <button class="br">Br</button>
      <button class="zoom">50% ${caret}</button>
      <span class="vsep"></span>
      <div class="views">
        <button aria-label="View options">${ic(18, 15, svg`<path d="M0 0h18v5H5v10H0z" fill="#555"/><path d="M2 1v2M5 1v2M8 1v2M11 1v2M14 1v2M1 6h2M1 9h2M1 12h2" stroke="#ddd"/><path d="M5 5h12.500v9.500H5z" fill="#eee" stroke="#555"/>`)}${caret}</button>
        <button aria-label="Screen mode">${ic(18, 15, svg`<rect x="3.500" y="2.500" width="11" height="10" fill="#777" stroke="#333"/><path d="M0.500 4V0.500H4M14 0.500h3.500V4M17.500 11v3.500H14M4 14.500H0.500V11" fill="none" stroke="#333"/>`)}${caret}</button>
        <button aria-label="Arrange documents">${ic(18, 15, svg`<rect x="0.500" y="0.500" width="17" height="14" fill="#777" stroke="#333"/><path d="M10.500 1v13M11 7.500h6" stroke="#ddd"/>`)}${caret}</button>
      </div>
      <span class="space"></span>
      <span class="vsep"></span>
      <button class="essent">Essentials ${caretSm}</button>
      <span class="vsep"></span>
      <label class="find">${ic(12, 14, svg`<circle cx="7" cy="5" r="4" fill="none" stroke="#444" stroke-width="1.400"/><path d="M4.500 8L1 13" stroke="#444" stroke-width="2"/>`)}<input aria-label="Search" /></label>
      <div class="wbtns">
        <button aria-label="Minimize">${ic(12, 12, svg`<rect x="1" y="8" width="10" height="3" fill="#333"/>`)}</button>
        <button aria-label="Maximize">${ic(12, 12, svg`<rect x="2" y="3" width="8" height="6" fill="none" stroke="#333" stroke-width="2"/>`)}</button>
        <button aria-label="Close">${ic(12, 12, svg`<path d="M2 2l8 8M10 2l-8 8" stroke="#333" stroke-width="2.400"/>`)}</button>
      </div>
    </header>`;
  }

  private renderControl() {
    const sep = html`<span class="vsep"></span>`;
    const fld = (l: string, v: string) => html`<div class="line"><label class="lbl" for="f${l}">${l}:</label>${spin(l)}<input class="field" id="f${l}" .value=${v} /></div>`;
    const combo = (l: string, g: unknown) => html`<div class="line">${g}<span></span>${spin(l)}${drop(l, "", "off")}</div>`;
    return html`<section class="control">
      <span class="dots"></span>
      ${ic(22, 20, svg`<path d="M3 3h14v14H3zM3 10h14M10 3v14" fill="none" stroke="#444"/>${[3, 10, 17].map((y) => [3, 10, 17].map((x) => svg`<rect x="${x - 2.500}" y="${y - 2.500}" width="5" height="5" fill="${x + y === 6 ? "#222" : "#fff"}" stroke="#333"/>`))}`)}
      <div class="col">${fld("X", "-102.75 mm")}${fld("Y", "-15.75 mm")}</div>
      <div class="col">${fld("W", "")}${fld("H", "")}</div>
      ${chainOff}${sep}
      <div class="col">
        ${combo("Scale X", ic(13, 14, svg`<path d="M1 1h5M1 13h5M1 1v12M4 1v12" stroke="#444" stroke-dasharray="1 1"/><rect x="5.500" y="1.500" width="7" height="11" fill="#f8f8f8" stroke="#444"/><path d="M5 7h5M8 4.500L11 7 8 9.500z" stroke="#222" fill="#222"/>`))}
        ${combo("Scale Y", ic(13, 14, svg`<path d="M1 10h11M1 13h11" stroke="#444" stroke-dasharray="1 1"/><rect x="1.500" y="0.500" width="10" height="8" fill="#f8f8f8" stroke="#444"/><path d="M6.500 2v5M4 5l2.500-3L9 5z" stroke="#222" fill="#222"/>`))}
      </div>
      <button class="chain" aria-label="Constrain proportions">${chainOn}</button>
      <div class="col">
        ${combo("Rotation", ic(14, 14, svg`<path d="M9 4L3 11h9" fill="none" stroke="#444" stroke-width="1.200"/><path d="M6 7q3 1 2 4" fill="none" stroke="#777"/>`))}
        ${combo("Shear", ic(14, 14, svg`<path d="M5 4h7l-3 6H2z" fill="#eee" stroke="#333" stroke-width="1.200"/>`))}
      </div>
      ${sep}
      <div class="col"><div class="line fxrow">${small("Rotate right", rot(false))}${small("Rotate left", rot(true))}</div><div class="line fxrow">${small("Flip horizontal", flipIcon(false))}${small("Flip vertical", flipIcon(true))}</div></div>
      ${ic(34, 26, svg`<g fill="none" stroke="#777"><path d="M5 5V1h4M25 1h4v4M29 21v4h-4M9 25H5v-4"/><path d="M13 21V5h5a4 4 0 0 1 0 9h-4M10.500 5h3M10.500 21h5.500" stroke-width="1.800"/></g>`)}
      ${sep}
      <div class="col"><div class="line fxrow">${small("Select container", tree(0, "#888"))}${small("Select previous", tree(2, "#333"))}</div><div class="line fxrow">${small("Select content", tree(1, "#888"))}${small("Select next", tree(3, "#333"))}</div></div>
      ${sep}
      <div class="col"><div class="line tight">${small("Fill", redSlash(18, 17))}${small("Fill menu", chevRight)}</div><div class="line tight">${small("Stroke", ic(18, 17, svg`<rect x="0.500" y="0.500" width="17" height="16" fill="#fff" stroke="#666"/><rect x="5.500" y="5.500" width="7" height="6" fill="none" stroke="#666"/><path d="M2 15L16 2" stroke="#d0021b" stroke-width="2"/>`))}${small("Stroke menu", chevRight)}</div></div>
      ${sep}
      <div class="col"><div class="line end">${spin("Stroke weight", true)}${drop("Stroke weight", "0 mm", "live")}</div><div class="line end">${drop("Stroke type", "", "live stroke")}</div></div>
      ${sep}
      <div class="col">
        <div class="line fxrow">${small("Corner", ic(15, 14, svg`<rect x="1.500" y="1.500" width="9" height="10" fill="#ccc" stroke="#555" stroke-dasharray="2 1"/><path d="M10 12h4l-2 2z" fill="#222"/>`))}${small("Shadow", ic(14, 14, svg`<rect x="4" y="4" width="9" height="9" fill="#333"/><rect x="1.500" y="1.500" width="9" height="9" fill="#f4f4f4" stroke="#999"/>`))}<button class="small fx" aria-label="Effects">fx.</button></div>
        <div class="line">${ic(12, 14, svg`<rect x="0.500" y="1.500" width="10" height="11" fill="#f4f4f4" stroke="#666"/><path d="M1 2h3v4H1zM7 2h3v4H7zM4 6h3v3H4zM1 9h3v3H1zM7 9h3v3H7z" fill="#aaa"/>`)}<span></span><span></span><input class="field live pct" aria-label="Opacity" .value=${"100%"} />${small("Opacity menu", chevRight)}</div>
      </div>
      ${sep}
      <div class="col"><div class="line fxrow">${small("No text wrap", wrapIcons[0], true)}${small("Wrap around bounding box", wrapIcons[1])}</div><div class="line fxrow">${small("Wrap around shape", wrapIcons[2])}${small("Jump object", wrapIcons[3])}</div></div>
      ${sep}
      <div class="col"><div class="line">${ic(16, 16, svg`<rect x="3.500" y="3.500" width="9" height="9" fill="#bbb" stroke="#666"/><path d="M1 1h4v4H1zM11 1h4v4h-4zM1 11h4v4H1zM11 11h4v4h-4z" fill="#1e90e8"/>`)}<span></span><span></span>${spin("Corner size", true)}<span></span><input class="field live" aria-label="Corner size" .value=${"4.233 mm"} /></div><div class="line"><span class="lbl"></span><span></span><span></span>${drop("Corner shape", "", "live corner")}</div></div>
      ${sep}
      <div class="col"><div class="line">${ic(16, 14, svg`<rect x="2.500" y="2.500" width="8" height="9" fill="none" stroke="#111" stroke-width="1.500"/><path d="M1 2h11M1 12h11M1.500 1v12M11.500 1v12" stroke="#111" stroke-width="3" stroke-dasharray="2 2"/><path d="M12 12h4l-2 2z" fill="#222"/>`)}${drop("Object style", "[Basic Graphics Frame]+", "live frame")}</div>
      <div class="line end">${small("Clear overrides", ic(17, 12, svg`<path d="M1.500 1.500h6v7h-6zM4.500 4.500h6v6h-6z" fill="#eee" stroke="#999"/><path d="M16 10V5h-4M13 2l-3 3 3 3" fill="none" stroke="#777" stroke-width="1.500"/>`))}${small("Redefine style", ic(17, 12, svg`<rect x="1.500" y="1.500" width="8" height="9" fill="#eee" stroke="#333" stroke-dasharray="2 1"/><path d="M16 1l-5 6M10 5l5 3" stroke="#222" stroke-width="1.500"/>`))}</div></div>
      ${sep}
      <span class="space"></span>
      ${small("Quick apply", bolt)}${sep}${small("Panel menu", flyout)}
    </section>`;
  }

  private renderTools() {
    return html`<aside class="tools">
      <div class="dockhead">${dblRight}</div>
      <div class="toolset">
        ${grip}
        ${tools.map((g) => html`<div class="tgroup">${g.map((t) => html`<button class=${classMap({ on: !!t.on })} aria-label=${t.name}>${t.glyph}</button>`)}</div>`)}
        <div class="fills">${ic(24, 29, svg`<rect x="9.500" y="7.500" width="11" height="11" fill="#fff" stroke="#666" stroke-width="1.500"/><rect x="12.500" y="10.500" width="5" height="5" fill="#fff" stroke="#666"/><path d="M11 17.500l8.500-9" stroke="#d0021b" stroke-width="1.800"/><rect x="1.500" y="0.500" width="11" height="12" fill="#fff" stroke="#666"/><path d="M3 11.500L11.500 2" stroke="#d0021b" stroke-width="1.800"/><path d="M16 2q5 0 5 4M18 0l-3 2 3 2zM19 5h4l-2 3z" fill="none" stroke="#444"/><path d="M4 21h6v7H4z" fill="#111"/><path d="M1.500 19.500h6v6h-6z" fill="#fff" stroke="#444"/><path d="M2 25l5-5" stroke="#d0021b"/>`)}</div>
        <div class="minis">${small("Formatting affects container", ic(11, 9, svg`<rect x="0" y="0" width="11" height="9" fill="#90c3ee"/><rect x="2.500" y="2" width="6" height="5" fill="#eee" stroke="#333"/>`))}${ic(8, 9, svg`<path d="M1 3V1h6v2M4 1v7M2.500 8h3" fill="none" stroke="#333" stroke-width="1.300"/>`)}</div>
        <div class="modewrap"><button class="modebtn" aria-label="Apply none">${ic(22, 17, svg`<rect x="5.500" y="2.500" width="11" height="11" fill="#fff" stroke="#666"/><path d="M6.500 12.500l9-9" stroke="#f00" stroke-width="1.800"/><path d="M22 13v3h-3z" fill="#222"/>`)}</button></div>
        <button class="modebtn" aria-label="Screen mode">${ic(22, 17, svg`<rect x="5.500" y="3.500" width="11" height="9" rx="1" fill="#ccc" stroke="#333" stroke-width="1.300"/><path d="M22 13v3h-3z" fill="#222"/>`)}</button>
      </div>
    </aside>`;
  }

  private renderDoc() {
    const len = (mm: number) => (mm % 50 === 0 ? 15 : mm % 10 === 0 ? 5 : 2);
    const hLen = this.view.w - 262;
    const vLen = this.view.h - 202;
    const hTicks = ticks(432, hLen);
    const vTicks = ticks(159, vLen);
    return html`<main class="doc">
      <div class="tabs">${docs.map((d) => html`<div class=${classMap({ tab: true, on: d.on })}><button>${d.name}</button><button aria-label="Close">${ic(8, 8, svg`<path d="M1.500 1.500l5 5M6.500 1.500l-5 5" stroke="#444" stroke-width="1.500"/>`)}</button></div>`)}</div>
      <div class="mid">
        <div class="hr">${ic(16, 15, svg`<path d="M0 6.500h16M5.500 0v15" stroke="#000" stroke-dasharray="1 1"/>`)}</div>
        <div class="hr"><svg width=${hLen} height="15" aria-hidden="true"><path d=${hTicks.map((t) => `M${t.pos} ${15 - len(t.mm)}V15`).join("")} stroke="#000"/>${hTicks.filter((t) => t.mm % 50 === 0 && t.pos < hLen - 20).map((t) => svg`<text x=${t.pos + 2} y="9" font-size="9">${Math.abs(t.mm)}</text>`)}</svg></div>
        <div class="vr"><svg width="15" height=${vLen} aria-hidden="true"><path d=${vTicks.map((t) => `M${15 - len(t.mm)} ${t.pos}H15`).join("")} stroke="#000"/>${vTicks.filter((t) => t.mm % 50 === 0 && t.pos < vLen - 28).map((t) => String(Math.abs(t.mm)).split("").map((c, i) => svg`<text x="2" y=${t.pos + 9 + i * 8} font-size="9">${c}</text>`))}</svg></div>
        <div class="canvas"></div>
        <div class="vs">${chevUp}${chevDown}</div>
      </div>
      <footer class="status">
        ${ic(9, 9, svg`<path d="M1 0.500v8" stroke="#777" stroke-width="1.400"/><path d="M8 0.500v8L3 4.500z" fill="#888"/>`)}
        ${ic(6, 9, svg`<path d="M5 0.500v8L0.500 4.500z" fill="#888"/>`)}
        ${drop("Page", "1", "live")}
        ${ic(6, 9, svg`<path d="M0.500 0.500v8L5 4.500z" fill="#888"/>`)}
        ${ic(9, 9, svg`<path d="M8 0.500v8" stroke="#777" stroke-width="1.400"/><path d="M1 0.500v8L6 4.500z" fill="#888"/>`)}
        <span></span>
        ${ic(16, 13, svg`<circle cx="6.500" cy="6.500" r="5.200" fill="#ddd" stroke="#666" stroke-width="1.500"/><path d="M5 3h3v4l3 2v2H6z" fill="#fff" stroke="#333"/><path d="M12 11h4l-2 2z" fill="#222"/>`)}
        <button class="err">${ic(12, 12, svg`<circle cx="6" cy="6" r="5.300" fill="#1fae12"/><circle cx="4.500" cy="4" r="2" fill="#6fe05a"/>`)}No errors</button>
        <span></span>
        ${caretSm}
        <div class="hs">${chevLeft}${chevRight}</div>
        <span class="split"><i></i><i></i></span>
        ${sizeGrip}
      </footer>
    </main>`;
  }

  private renderDock() {
    return html`<aside class="dock">
      <div class="dockhead right">${dblLeft}</div>
      ${dock.map((g) => html`<section class="dgroup"><div class="dgrip">${grip}</div>${g.map((d) => html`<button>${d.glyph}${d.name}</button>`)}</section>`)}
    </aside>`;
  }

  private renderPathfinder() {
    return html`<section class="panel pathfinder">
      <div class="dockhead right">${dblLeft}${closeX}</div>
      <div class="ptabs"><button>Align</button><button class="on">Pathfinder</button></div>
      ${pathSections.map((s) => html`<div class="psec"><h3>${s.name}</h3>${s.rows.map((r) => html`<div class="prow">${r.map(([n, g]) => html`<button aria-label=${n}>${g}</button>`)}</div>`)}</div>`)}
    </section>`;
  }

  private renderTextWrap() {
    const off = (n: string, g: unknown) => html`<div class="line">${g}${spin(n)}<input class="field" aria-label=${n} .value=${"0 mm"} /></div>`;
    const box = (x: number, y: number) => svg`<rect x="${x}" y="${y}" width="6" height="6" fill="#888" stroke="#333"/>`;
    return html`<section class="panel textwrap">
      <div class="dockhead right">${dblLeft}${closeX}</div>
      <div class="ptabs"><button class="on">${updown}Text Wrap</button><button class="menu" aria-label="Panel menu">${flyout}</button></div>
      <div class="top">${["No text wrap", "Bounding box", "Object shape", "Jump object", "Jump to next column"].map((n, i) => small(n, wrapIcons[i], i === 0))}<label class="check"><input type="checkbox" />Invert</label></div>
      <div class="offs">
        <div class="col">${off("Top offset", ic(14, 14, svg`<path d="M2 1h9M6.500 1v4M5 3h3" stroke="#111"/>${box(3.500, 6.500)}`))}${off("Bottom offset", ic(14, 14, svg`${box(3.500, 0.500)}<path d="M2 12.500h9M6.500 8v5M5 11h3" stroke="#111"/>`))}</div>
        ${chainOff}
        <div class="col">${off("Left offset", ic(14, 14, svg`<path d="M1 3v8M1 7h5M3 5.500v3" stroke="#111"/>${box(6.500, 3.500)}`))}${off("Right offset", ic(14, 14, svg`${box(0.500, 3.500)}<path d="M13 3v8M13 7H8M11 5.500v3" stroke="#111"/>`))}</div>
      </div>
      <div class="wopts">
        <span class="full">Wrap Options:</span>
        <label for="wrapto">Wrap To:</label>${drop("Wrap To", "Both Right & Left Sides", "", "wrapto")}
        <span class="full">Contour Options:</span>
        <label for="ctype">Type:</label>${drop("Type", "", "", "ctype")}
      </div>
      <div class="include">${check("Include Inside Edges", false)}</div>
    </section>`;
  }

  private renderCharStyles() {
    return html`<section class="panel charstyles">
      <div class="dockhead right">${dblLeft}${closeX}</div>
      <div class="ptabs"><button class="on">${updown}Character Styles</button><button class="menu" aria-label="Panel menu">${flyout}</button></div>
      <div class="cshead"><span>[None]</span>${bolt}</div>
      <div class="cslist">
        <ul><li class="on"><button>[None]${ic(12, 12, svg`<path d="M2 11q4 0 4-3l3-7 2 1-3 7" fill="none" stroke="#111" stroke-width="1.500"/><path d="M1 1l10 10M11 1L1 11" stroke="#d0021b"/>`)}</button></li><li><button>Character Style 1</button></li></ul>
        <div class="sbar">${chevUp}${chevDown}</div>
      </div>
      <div class="csfoot">
        ${small("New group", ic(13, 11, svg`<path d="M1 2h4l1 1.500h5.500V10H1z" fill="#ddd" stroke="#444"/>`))}
        ${small("New style", ic(11, 11, svg`<path d="M0.500 0.500h9v9H4L0.500 6z" fill="#fff" stroke="#222"/><path d="M1 5h4v5z" fill="#333"/><path d="M10 1v9.500H2" stroke="#111" fill="none"/>`))}
        ${small("Delete", ic(11, 11, svg`<path d="M2 3h7l-1 8H3zM1 2.500h9M4 1h3" fill="#ddd" stroke="#777"/><path d="M4.500 4v6M6.500 4v6" stroke="#777"/>`))}
        ${sizeGrip}
      </div>
      <div class="csgrip">${grip}</div>
    </section>`;
  }

  private renderDialog() {
    const row = (l: string, on: boolean) => html`<div class="row">${check(l, on)}</div>`;
    return html`<section class="dialog" role="dialog" aria-label="Preferences">
      <h1>Preferences</h1>
      <div class="dbody">
        <div class="plist"><ul>${prefs.map((n) => html`<li class=${classMap({ on: n === "Type" })}><button>${n}</button></li>`)}<li class="rest"></li></ul><div class="sbar">${chevUp}${chevDown}</div></div>
        <div class="pane">
          <h2>Type</h2>
          <fieldset><legend>Type Options</legend>
            ${row("Use Typographer's Quotes", false)}${row("Type Tool Converts Frames to Text Frames", true)}${row("Automatically Use Correct Optical Size", true)}${row("Triple Click to Select a Line", true)}${row("Apply Leading to Entire Paragraphs", true)}${row("Adjust Spacing Automatically When Cutting and Pasting Words", true)}
            <div class="row">${check("Font Preview Size:", true)}${drop("Font Preview Size", "Medium", "live")}</div>
            <div class="row num"><label for="recent"><u>N</u>umber of Recent Fonts to Display:</label><input id="recent" .value=${"10"} /></div>
            <div class="row gap">${check("Sort Recent Fonts List Alphabetically", false)}</div>
          </fieldset>
          <fieldset><legend>Drag and Drop Text Editing</legend>${row("Enable in Layout View", false)}${row("Enable in Story Editor", true)}</fieldset>
          <fieldset><legend>${check("Smart Text Reflow", true)}</legend>
            <div class="row add"><label for="addpages"><u>A</u>dd Pages To:</label>${drop("Add Pages To", "End of Story", "live wide", "addpages")}</div>
            ${row("Limit to Primary Text Frames", true)}${row("Preserve Facing-Page Spreads", false)}${row("Delete Empty Pages", false)}
          </fieldset>
        </div>
      </div>
      <div class="btns"><button class="ok">OK</button><button>Cancel</button></div>
    </section>`;
  }

  render() {
    return html`<div class="screen">
      <div class="behind"><div class="behindtabs">${Array.from({ length: 10 }, (_, i) => html`<i class=${classMap({ sheet: i === 6, lime: i > 6, live: i === 7 })}></i>`)}<b></b></div></div>
      <div class="behindbar"><i></i></div>
      <div class="behindfoot"></div>
      <div class="app">
        ${this.renderBar()}${this.renderControl()}
        <div class="work">${this.renderTools()}<span class="divider"></span>${this.renderDoc()}<span class="divider"></span>${this.renderDock()}</div>
      </div>
      ${this.renderDialog()}${this.renderPathfinder()}${this.renderTextWrap()}${this.renderCharStyles()}
      <footer class="taskbar">
        <svg class="grain" aria-hidden="true"><filter id="grain" x="0" y="0" width="100%" height="100%"><feTurbulence type="fractalNoise" baseFrequency="0.14" numOctaves="3" seed="4"/><feColorMatrix values="0 0 0 0 0  0 0 0 0 0  0 0 0 0 0  5 0 0 0 -2.4"/></filter><rect width="100%" height="100%" filter="url(#grain)" opacity="0.7"/></svg>
        <div class="tray"><time>14:15<br />06/06/2018</time><span>עבר<br />HE3</span>${ic(16, 17, svg`<path d="M0.500 1.500h15v11h-5L8 15.500 5.500 12.500h-5zM3 5h10M3 7.500h10M3 10h6" fill="none" stroke="#fff" stroke-width="1.200"/>`)}</div>
        <button class="up" aria-label="Show hidden icons">${ic(14, 9, svg`<path d="M1 8l6-6 6 6" fill="none" stroke="#fff" stroke-width="1.500"/>`)}</button>
        <div class="apps">${apps.map((a) => html`<button class=${classMap({ open: !!a.open, on: !!a.on })} aria-label=${a.name}>${a.glyph}</button>`)}</div>
      </footer>
    </div>`;
  }
}
